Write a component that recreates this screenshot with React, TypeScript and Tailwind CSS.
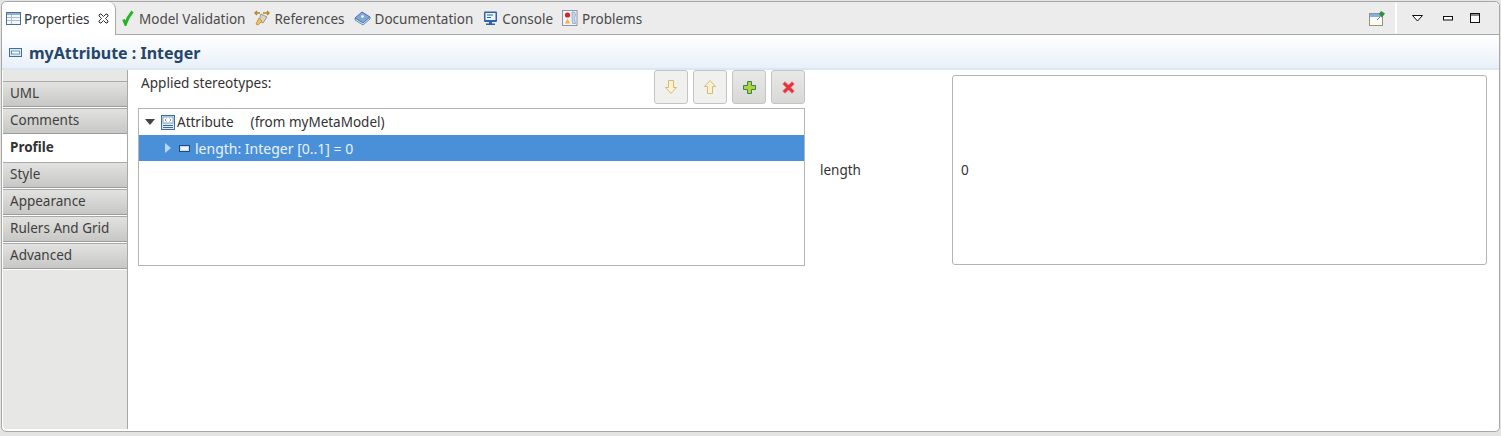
import React from 'react';

const TABS_FONT = "font-['Noto_Sans','Open_Sans',sans-serif]";

function PropertiesIcon() {
  return (
    <svg width="16" height="16" viewBox="0 0 16 16" className="shrink-0">
      <rect x="0.500" y="1.500" width="14" height="12" fill="#f4f7fb" stroke="#4c6f96" />
      <rect x="1" y="2" width="13" height="2" fill="#8fb0d6" />
      <path d="M5.500 4v9M1 6.500h13M1 9.500h13" stroke="#a9bdd4" />
    </svg>
  );
}

function CloseIcon() {
  return (
    <svg width="11" height="11" viewBox="0 0 11 11" className="shrink-0">
      <path d="M1 2l1-1h1l2.500 2.500L8 1h1l1 1v1L7.500 5.500 10 8v1l-1 1H8L5.500 7.500 3 10H2l-1-1V8l2.500-2.500L1 3z" fill="#fff" stroke="#333" strokeWidth="1" />
    </svg>
  );
}

function CheckIcon() {
  return (
    <svg width="13" height="16" viewBox="0 0 13 16" className="shrink-0">
      <path d="M1.500 9.500l2 4.500C5 9 7.500 5 10.500 1.500" fill="none" stroke="#22b422" strokeWidth="2.800" />
    </svg>
  );
}

function ReferencesIcon() {
  return (
    <svg width="16" height="16" viewBox="0 0 16 16" className="shrink-0">
      <path d="M1 3h5M3 1L1 3l2 2M9 3h6M13 1l2 2-2 2" fill="none" stroke="#b8862c" strokeWidth="1.400" />
      <path d="M7 4l6 3-4 6-4-2z" fill="#d9d4c4" stroke="#8d8570" strokeWidth="0.800" />
      <path d="M2 14l3-6 3 3-4 4z" fill="#f0c65a" stroke="#b8862c" strokeWidth="0.800" />
    </svg>
  );
}

function DocumentationIcon() {
  return (
    <svg width="17" height="16" viewBox="0 0 17 16" className="shrink-0">
      <path d="M1 8l7-6 8 5-7 6z" fill="#7fa9d8" stroke="#4a739f" />
      <path d="M1 8v2l8 5 7-6V7l-7 6z" fill="#d9e4f0" stroke="#4a739f" strokeWidth="0.800" />
      <circle cx="8.500" cy="6.500" r="1.300" fill="#fff" />
    </svg>
  );
}

function ConsoleIcon() {
  return (
    <svg width="16" height="15" viewBox="0 0 16 15" className="shrink-0">
      <rect x="2" y="0.500" width="13" height="10.500" rx="1" fill="#2f64a8" />
      <rect x="3.500" y="2" width="10" height="7" fill="#eef4fb" />
      <path d="M5 4h6M5 6.500h4" stroke="#2f64a8" />
      <path d="M7 11h3v1.500H7zM4 12.500h9V14H4z" fill="#2f64a8" />
    </svg>
  );
}

function ProblemsIcon() {
  return (
    <svg width="16" height="16" viewBox="0 0 16 16" className="shrink-0">
      <rect x="0.500" y="0.500" width="14.500" height="15" fill="#f1f3f6" stroke="#8d97a5" />
      <circle cx="5.500" cy="5" r="2.600" fill="#d8202a" />
      <path d="M3 13.500l2.500-5 2.500 5z" fill="#f3b23a" />
      <path d="M10 2h2.500l1 3-1 3 1 5.500h-3L10 8.500z" fill="#c4d8ee" stroke="#7f9cbd" strokeWidth="0.700" />
    </svg>
  );
}

function PinIcon() {
  return (
    <svg width="16" height="15" viewBox="0 0 16 15">
      <rect x="0.500" y="2.500" width="13" height="12" fill="#fbfaf3" stroke="#98927f" />
      <rect x="1" y="3" width="12" height="3" fill="#7fb0e6" />
      <path d="M8 9l3-3" stroke="#777" />
      <path d="M10 3l2-3 4 2.500-3 4z" fill="#2f8f3f" />
    </svg>
  );
}

function Tab({ icon, label }: { icon: React.ReactNode; label: string }) {
  return (
    <div className="flex items-center gap-[4px] text-[#4a4a4a]">
      {icon}
      <span className="pt-[2px]">{label}</span>
    </div>
  );
}

function SideItem({ label, active }: { label: string; active?: boolean }) {
  if (active) {
    return <div className="h-[27px] bg-white pl-[7px] font-bold leading-[24px] text-[#333]">{label}</div>;
  }
  return (
    <div className="h-[27px] border-y border-t-[#a9a9a9] border-b-white bg-gradient-to-b from-[#e2e2e0] to-[#c6c6c4] pl-[7px] leading-[22px] text-[#3f3f3f] shadow-[inset_0_-1px_0_#9c9c9c]">
      {label}
    </div>
  );
}

function ToolButton({ enabled, children }: { enabled?: boolean; children: React.ReactNode }) {
  return (
    <div
      className={`flex h-[34px] w-[34px] items-center justify-center rounded-[3px] border border-[#c4c4c4] ${
        enabled ? 'bg-gradient-to-b from-[#e8e8e6] to-[#d8d8d6]' : 'bg-[#f0f0ee]'
      }`}
    >
      {children}
    </div>
  );
}

export default function App() {
  return (
    <div className={`h-[436px] w-[1501px] overflow-hidden bg-[#e4e4e2] text-[13.5px] ${TABS_FONT}`}>
      <div className="ml-[1px] mt-[1px] flex h-[431px] w-[1499px] flex-col rounded-[5px] border border-[#a8a8a8] bg-white">
        {/* tab strip */}
        <div className="flex h-[33px] shrink-0 rounded-t-[5px] border-b border-[#a8a8a8] bg-[#ececec]">
          <div className="relative z-10 -mb-px flex h-[33px] w-[114px] items-center gap-[2px] rounded-tl-[5px] rounded-tr-[7px] border-r border-[#a8a8a8] bg-white pl-[4px] text-[#333]">
            <PropertiesIcon />
            <span className="pt-[1px]">Properties</span>
            <span className="ml-[6px]"><CloseIcon /></span>
          </div>
          <div className="ml-[6px] flex items-center gap-[9px]">
            <Tab icon={<CheckIcon />} label="Model Validation" />
            <Tab icon={<ReferencesIcon />} label="References" />
            <Tab icon={<DocumentationIcon />} label="Documentation" />
            <Tab icon={<ConsoleIcon />} label="Console" />
            <Tab icon={<ProblemsIcon />} label="Problems" />
          </div>
          <div className="ml-auto flex items-center pr-[19px]">
            <PinIcon />
            <div className="ml-[10px] h-[30px] w-[2px] bg-white" />
            <svg width="11" height="7" viewBox="0 0 11 7" className="ml-[15px]"><path d="M.5.500h10L5.500 6z" fill="#fff" stroke="#111" /></svg>
            <svg width="10" height="5" viewBox="0 0 10 5" className="ml-[20px]"><rect x=".5" y=".5" width="9" height="3.500" fill="#fff" stroke="#111" /></svg>
            <svg width="10" height="10" viewBox="0 0 10 10" className="ml-[17px]"><rect x=".5" y=".5" width="9" height="9" fill="#fff" stroke="#111" /><path d="M0 2h10" stroke="#111" /></svg>
          </div>
        </div>

        {/* form title */}
        <div className="flex h-[35px] shrink-0 items-center gap-[7px] border-b-2 border-[#dbe7f5] bg-gradient-to-b from-white to-[#e9f0f8] pl-[7px] pt-[2px] text-[16px] font-bold text-[#25466b]">
          <svg width="13" height="9" viewBox="0 0 13 9" className="shrink-0">
            <rect x=".5" y=".5" width="12" height="8" fill="#dce8f4" stroke="#3f6f9f" />
            <rect x="2.500" y="3" width="8" height="3" fill="#fff" stroke="#3f6f9f" strokeWidth=".7" />
          </svg>
          <span>myAttribute : Integer</span>
        </div>

        {/* body */}
        <div className="flex min-h-0 flex-1">
          <div className="mb-[2px] ml-[1px] w-[125px] shrink-0 rounded-bl-[4px] border-r border-[#a8a8a8] bg-[#e7e7e5] pt-[11px]">
            <SideItem label="UML" />
            <SideItem label="Comments" />
            <SideItem label="Profile" active />
            <SideItem label="Style" />
            <SideItem label="Appearance" />
            <SideItem label="Rulers And Grid" />
            <SideItem label="Advanced" />
          </div>

          <div className="ml-[10px] flex w-[667px] shrink-0 flex-col">
            <div className="flex h-[38px] items-start justify-between">
              <span className="ml-[3px] mt-[3px] text-[13.6px] text-[#333]">Applied stereotypes:</span>
              <div className="flex gap-[5px]">
                <ToolButton>
                  <svg width="14" height="16" viewBox="0 0 14 16"><path d="M4.500 1.500h5v7h3L7 14.500 1.500 8.500h3z" fill="#fdf3cf" stroke="#d9b877" /></svg>
                </ToolButton>
                <ToolButton>
                  <svg width="14" height="16" viewBox="0 0 14 16"><path d="M4.500 14.500h5v-7h3L7 1.500 1.500 7.500h3z" fill="#fdf3cf" stroke="#d9b877" /></svg>
                </ToolButton>
                <ToolButton enabled>
                  <svg width="13" height="13" viewBox="0 0 13 13"><path d="M4.500.500h4v4h4v4h-4v4h-4v-4h-4v-4h4z" fill="#b5cf3f" stroke="#2f8a4a" /></svg>
                </ToolButton>
                <ToolButton enabled>
                  <svg width="13" height="13" viewBox="0 0 13 13"><path d="M3 .500l3.500 3.500L10 .500 12.500 3 9 6.500l3.500 3.500-2.500 2.500L6.500 9 3 12.500.500 10 4 6.500.500 3z" fill="#e8303c" stroke="#f6b0b0" strokeWidth=".6" /></svg>
                </ToolButton>
              </div>
            </div>
            <div className="h-[158px] border border-[#b4b4b4] bg-white text-[#333]">
              <div className="flex h-[26px] items-center pl-[6px]">
                <svg width="10" height="6" viewBox="0 0 10 6"><path d="M0 0h10L5 6z" fill="#444" /></svg>
                <svg width="14" height="15" viewBox="0 0 14 15" className="ml-[6px]">
                  <rect x=".5" y=".5" width="13" height="14" fill="#dfeaf6" stroke="#3f6f9f" />
                  <rect x="2" y="2" width="10" height="6" fill="#fff" stroke="#3f6f9f" strokeWidth=".6" />
                  <path d="M4 5l1.500-1.500M4 5l1.500 1.500M10 5L8.500 3.500M10 5L8.500 6.500" stroke="#3f6f9f" strokeWidth=".7" />
                  <path d="M2 10.500h10M2 12.500h10" stroke="#3f6f9f" />
                </svg>
                <span className="ml-[2px]">Attribute</span>
                <span className="ml-[17px]">(from myMetaModel)</span>
              </div>
              <div className="flex h-[26px] items-center bg-[#4a90d9] pl-[26px] text-[14px] text-[#eaf2fb]">
                <svg width="6" height="10" viewBox="0 0 6 10"><path d="M0 0l6 5-6 5z" fill="#b9d5f2" /></svg>
                <svg width="11" height="7" viewBox="0 0 11 7" className="ml-[8px]">
                  <rect x=".5" y=".5" width="10" height="6" fill="#c9def3" stroke="#234a75" />
                  <rect x="2" y="2.500" width="7" height="2" fill="#fff" />
                </svg>
                <span className="ml-[5px]">length: Integer [0..1] = 0</span>
              </div>
            </div>
          </div>

          <div className="ml-[15px] flex h-[199px] items-center self-start pt-[1px]">
            <span className="w-[132px] text-[#333]">length</span>
          </div>
          <div className="mt-[5px] flex h-[190px] w-[535px] shrink-0 items-center self-start rounded-[3px] border border-[#b4b4b4] pt-[1px] pl-[8px] text-[#333]">
            0
          </div>
        </div>
      </div>
    </div>
  );
}
